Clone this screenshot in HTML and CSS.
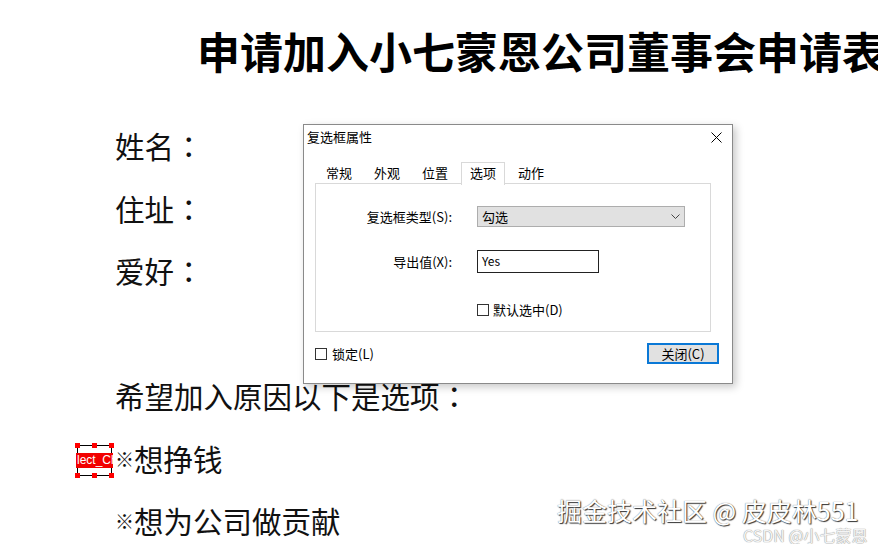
FILE: index.html
```html
<!DOCTYPE html>
<html lang="zh-CN">
<head>
<meta charset="utf-8">
<title>申请表</title>
<link rel="stylesheet" href="styles.css">
</head>
<body>
<h1 class="title">申请加入小七蒙恩公司董事会申请表</h1>
<div class="doc">
  <p class="line">姓名<span class="colon" lang="zh-TW">：</span></p>
  <p class="line">住址<span class="colon" lang="zh-TW">：</span></p>
  <p class="line">爱好<span class="colon" lang="zh-TW">：</span></p>
  <p class="line"></p>
  <p class="line">希望加入原因以下是选项<span class="colon" lang="zh-TW">：</span></p>
  <p class="line"><span class="mark">※</span>想挣钱</p>
  <p class="line"><span class="mark">※</span>想为公司做贡献</p>
</div>

<div class="field">
  <div class="field-frame"></div>
  <div class="field-band">lect_Ch</div>
  <span class="handle h-tl"></span>
  <span class="handle h-tm"></span>
  <span class="handle h-tr"></span>
  <span class="handle h-bl"></span>
  <span class="handle h-bm"></span>
  <span class="handle h-br"></span>
</div>

<div class="dialog">
  <div class="dlg-titlebar">
    <span class="dlg-title">复选框属性</span>
    <svg class="dlg-close" width="11" height="11" viewBox="0 0 11 11"><path d="M0.5 0.5 L10.5 10.5 M10.5 0.5 L0.5 10.5" stroke="#000" stroke-width="1" fill="none"/></svg>
  </div>
  <div class="tabs">
    <span class="tab">常规</span>
    <span class="tab">外观</span>
    <span class="tab">位置</span>
    <span class="tab tab-active">选项</span>
    <span class="tab">动作</span>
  </div>
  <div class="panel">
    <div class="row row-type">
      <span class="label">复选框类型(S):</span>
      <div class="select"><span>勾选</span><svg width="9" height="6" viewBox="0 0 9 6"><path d="M0.5 0.5 L4.5 4.5 L8.5 0.5" stroke="#444" stroke-width="1" fill="none"/></svg></div>
    </div>
    <div class="row row-export">
      <span class="label">导出值(X):</span>
      <div class="input">Yes</div>
    </div>
    <div class="row row-default">
      <span class="label"></span>
      <label class="check"><span class="box"></span>默认选中(D)</label>
    </div>
  </div>
  <div class="footer">
    <label class="check"><span class="box box-lock"></span>锁定(L)</label>
    <div class="button">关闭(C)</div>
  </div>
</div>

<div class="wm">掘金技术社区 @ 皮皮林551</div>
<div class="wm2">CSDN @小七蒙恩</div>
</body>
</html>
```

FILE: styles.css
```css
html, body {
  margin: 0;
  padding: 0;
  background: #fff;
}
body {
  width: 878px;
  height: 544px;
  overflow: hidden;
  position: relative;
  font-family: "Noto Sans CJK SC", "Noto Sans", sans-serif;
  color: #000;
}
.title {
  margin: 0;
  padding: 29px 0 0 197px;
  font-size: 43px;
  line-height: 42px;
  font-weight: 700;
  white-space: nowrap;
}
.doc {
  padding: 43px 0 0 115px;
}
.line {
  margin: 0;
  font-size: 29.5px;
  line-height: 62.5px;
  height: 62.5px;
  white-space: nowrap;
  color: #111;
}
.colon {
  font-family: "Noto Sans CJK TC", "Noto Sans CJK JP", sans-serif;
}
.mark {
  font-size: 19px;
  vertical-align: 4px;
}

/* selected form field */
.field {
  position: absolute;
  left: 75px;
  top: 442px;
  width: 39px;
  height: 36px;
}
.field-frame {
  position: absolute;
  left: 2px;
  top: 3px;
  width: 33px;
  height: 29px;
  border: 1px solid #000;
}
.field-band {
  position: absolute;
  left: 1px;
  top: 11px;
  width: 37px;
  height: 15px;
  background: #f20000;
  color: #fff;
  font-family: "Liberation Sans", Arial, sans-serif;
  font-size: 12px;
  line-height: 15px;
  padding-left: 1px;
  box-sizing: border-box;
  overflow: hidden;
  white-space: nowrap;
}
.handle {
  position: absolute;
  width: 5px;
  height: 5px;
  background: #f00;
}
.h-tl { left: 0; top: 1px; }
.h-tm { left: 17px; top: 1px; }
.h-tr { left: 34px; top: 1px; }
.h-bl { left: 0; top: 31px; }
.h-bm { left: 17px; top: 31px; }
.h-br { left: 34px; top: 31px; }

/* dialog */
.dialog {
  position: absolute;
  left: 303px;
  top: 124px;
  width: 430px;
  height: 260px;
  box-sizing: border-box;
  border: 1px solid #8a8a8a;
  background: #fff;
  box-shadow: 3px 3px 8px rgba(0, 0, 0, 0.22);
  font-size: 13px;
  color: #000;
}
.dlg-titlebar {
  height: 24px;
  display: flex;
  align-items: center;
  justify-content: space-between;
  padding: 0 10px 0 3px;
}
.dlg-title {
  line-height: 24px;
}
.dlg-close {
  display: block;
}
.tabs {
  display: flex;
  margin-top: 13px;
  margin-bottom: -1px;
  padding-left: 11px;
  height: 22px;
  position: relative;
  z-index: 1;
}
.tab {
  padding: 1px 11px 1px;
  line-height: 20px;
  height: 20px;
}
.tab-active {
  margin: 0 2px;
  padding: 0 8px 2px;
  border: 1px solid #d9d9d9;
  border-bottom: none;
  background: #fff;
}
.panel {
  margin-left: 11px;
  width: 396px;
  height: 149px;
  box-sizing: border-box;
  border: 1px solid #d9d9d9;
  padding-top: 22px;
}
.row {
  display: flex;
  align-items: center;
  gap: 25px;
}
.label {
  width: 136px;
  text-align: right;
}
.row-type { height: 21px; }
.row-export { height: 23px; margin-top: 23px; }
.row-default { height: 13px; margin-top: 30px; }
.select {
  width: 208px;
  height: 21px;
  box-sizing: border-box;
  border: 1px solid #adadad;
  background: #e1e1e1;
  display: flex;
  align-items: center;
  justify-content: space-between;
  padding: 0 4px 0 4px;
  line-height: 19px;
}
.input {
  width: 122px;
  height: 23px;
  box-sizing: border-box;
  border: 1px solid #222;
  background: #fff;
  padding-left: 4px;
  font-size: 12px;
  line-height: 19px;
}
.check {
  display: flex;
  align-items: center;
  gap: 4px;
  line-height: 16px;
}
.box {
  width: 12px;
  height: 12px;
  box-sizing: border-box;
  border: 1px solid #333;
  background: #fff;
}
.box-lock {
  margin-right: 1px;
}
.footer {
  display: flex;
  justify-content: space-between;
  align-items: center;
  margin-top: 11px;
  padding: 0 13px 0 11px;
}
.button {
  width: 72px;
  height: 21px;
  box-sizing: border-box;
  border: 2px solid #0a78d6;
  background: #e1e1e1;
  text-align: center;
  line-height: 17px;
}

/* watermarks */
.wm {
  position: absolute;
  left: 557px;
  top: 498px;
  font-size: 25px;
  line-height: 25px;
  white-space: nowrap;
  color: #fff;
  text-shadow: 1px 1px 1px #333, 0 0 1px #555;
}
.wm2 {
  position: absolute;
  left: 743px;
  top: 527px;
  font-size: 16px;
  line-height: 16px;
  white-space: nowrap;
  color: #f4f4f4;
  text-shadow: 0 0 1px #9a9a9a, 0 0 1px #9a9a9a;
}
```
